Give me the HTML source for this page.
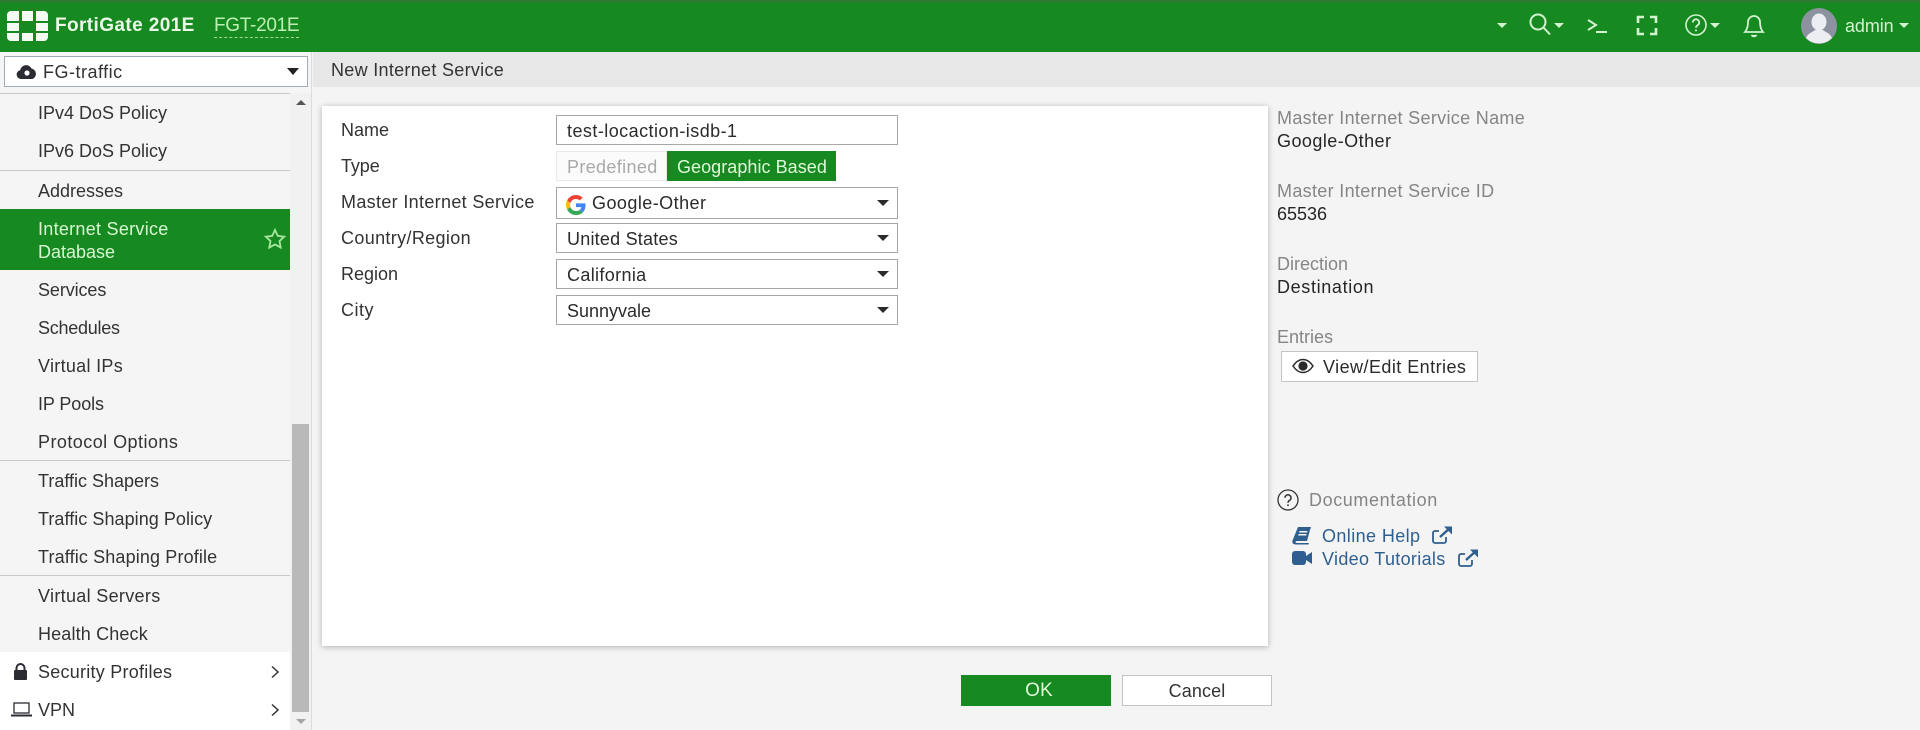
<!DOCTYPE html>
<html><head><meta charset="utf-8"><title>New Internet Service</title>
<style>
*{box-sizing:border-box}
html,body{margin:0;padding:0;width:1920px;height:730px;overflow:hidden;background:#f4f4f4;font-family:"Liberation Sans",sans-serif;font-size:18px;color:#333}
.t{position:absolute;white-space:nowrap;line-height:22px;height:22px;letter-spacing:.1px}
.b{position:absolute}
.sb{left:38px}
.lab{left:341px}
.inp{position:absolute;left:556px;width:342px;background:#fff;border:1px solid #a6a6a6}
.car{position:absolute;width:0;height:0;border-left:6px solid transparent;border-right:6px solid transparent;border-top:6px solid #2b2b2b}
.g{color:#858585;left:1277px}
.d{color:#262626;left:1277px}
.hc{position:absolute;width:0;height:0;border-left:5px solid transparent;border-right:5px solid transparent;border-top:5px solid #d2f2d0}
svg{position:absolute;overflow:visible}
.sep{position:absolute;left:0;width:290px;height:1px;background:#c9c9c9}
.lnk{color:#2f5f8f}
</style></head><body>

<!-- top bar -->
<div class="b" style="left:0;top:0;width:1920px;height:52px;background:#168a20;border-top:3px solid #2a7a30"></div>
<svg style="left:0;top:0" width="60" height="52" fill="#f4fbf2">
<path d="M11 11h8v10H7v-6a4 4 0 0 1 4-4zM22 11h11v10H22zM36 11h8a4 4 0 0 1 4 4v6H36zM7 23h12v8H7zM36 23h12v8H36zM7 33h12v8h-8a4 4 0 0 1-4-4zM22 33h11v8H22zM36 33h12v4a4 4 0 0 1-4 4h-8z"/>
</svg>
<div class="t" style="left:55px;top:15px;font-weight:bold;font-size:19px;color:#ecf9e8;letter-spacing:.4px">FortiGate 201E</div>
<div class="t" style="left:214px;top:15px;font-size:19px;color:#bdf0b4;letter-spacing:-.3px;height:23px;border-bottom:1px dashed #9fd89a">FGT-201E</div>

<div class="hc" style="left:1497px;top:23px"></div>
<svg style="left:1527px;top:12px" width="28" height="26" fill="none" stroke="#d2f2d0" stroke-width="2"><circle cx="11" cy="10" r="7.5"/><path d="M16.500 15.500l6.500 7"/></svg>
<div class="hc" style="left:1554px;top:23px"></div>
<svg style="left:1586px;top:16px" width="24" height="20" fill="none" stroke="#d2f2d0" stroke-width="2"><path d="M2 4l8 5-8 5M10 16h11"/></svg>
<svg style="left:1636px;top:15px" width="22" height="22" fill="none" stroke="#d2f2d0" stroke-width="2.6"><path d="M8 2H2v6M14 2h6v6M2 13v6h6M20 13v6h-6"/></svg>
<svg style="left:1684px;top:13px" width="24" height="24" fill="none" stroke="#d2f2d0" stroke-width="1.6"><circle cx="12" cy="12" r="10"/><path d="M8.800 9.500a3.200 3.200 0 1 1 5 2.600c-1.200.8-1.800 1.400-1.800 2.600" stroke-width="1.8"/><circle cx="12" cy="17.400" r="1" fill="#d2f2d0" stroke="none"/></svg>
<div class="hc" style="left:1710px;top:23px"></div>
<svg style="left:1743px;top:14px" width="22" height="24" fill="none" stroke="#d2f2d0" stroke-width="1.8"><path d="M11 2a6 6 0 0 0-6 6c0 5-1 7.500-3 10h18c-2-2.500-3-5-3-10a6 6 0 0 0-6-6z"/><path d="M8.500 21a3 3 0 0 0 5 0" fill="#d2f2d0"/></svg>
<svg style="left:1801px;top:8px" width="36" height="36"><circle cx="18" cy="18" r="18" fill="#8d92a0"/><ellipse cx="18" cy="14" rx="7.500" ry="8.500" fill="#eceef2"/><path d="M5 30c2-5 7-6 9-8h8c2 2 7 3 9 8a18 18 0 0 1-26 0z" fill="#eceef2"/></svg>
<div class="t" style="left:1845px;top:15px;color:#d2f2d0;font-size:18px;letter-spacing:-.1px">admin</div>
<div class="hc" style="left:1899px;top:23px"></div>

<!-- sidebar -->
<div class="b" style="left:0;top:52px;width:312px;height:678px;background:#f5f5f5;border-right:1px solid #dcdcdc"></div>
<div class="b" style="left:290px;top:93px;width:21px;height:637px;background:#f1f1f1"></div>
<div class="b" style="left:292px;top:424px;width:17px;height:288px;background:#b9b9b9"></div>
<div class="car" style="left:296px;top:100px;border-top:0;border-bottom:5px solid #555;border-left-width:5px;border-right-width:5px"></div>
<div class="car" style="left:296px;top:719px;border-top-color:#a5a5a5;border-top-width:5px;border-left-width:5px;border-right-width:5px"></div>

<div class="b" style="left:4px;top:56px;width:304px;height:31px;background:#fff;border:1px solid #a3abb5"></div>
<svg style="left:16px;top:63px" width="22" height="17"><path d="M5 16a4.500 4.500 0 0 1-.8-8.900A6 6 0 0 1 15.500 5.500 5.500 5.500 0 0 1 16.500 16z" fill="#2b2b33"/><circle cx="11" cy="10" r="2.600" fill="#fff"/></svg>
<div class="t" style="left:43px;top:61px;letter-spacing:.5px">FG-traffic</div>
<div class="car" style="left:287px;top:68px;border-left-width:6px;border-right-width:6px;border-top-width:7px;border-top-color:#222"></div>

<div class="sep" style="top:93px"></div>
<div class="t sb" style="top:102px;letter-spacing:0">IPv4 DoS Policy</div>
<div class="t sb" style="top:140px;letter-spacing:0">IPv6 DoS Policy</div>
<div class="sep" style="top:170px"></div>
<div class="t sb" style="top:180px;letter-spacing:0">Addresses</div>
<div class="b" style="left:0;top:209px;width:290px;height:61px;background:#168a20"></div>
<div class="t sb" style="top:218px;color:#d9f7d2;letter-spacing:.28px">Internet Service</div>
<div class="t sb" style="top:241px;color:#d9f7d2;letter-spacing:0">Database</div>
<svg style="left:264px;top:228px" width="22" height="22" fill="none" stroke="#a8e6a0" stroke-width="1.800"><path d="M11 2l2.800 5.900 6.400.8-4.700 4.400 1.200 6.400L11 16.400 5.300 19.500l1.200-6.400L1.800 8.700l6.400-.8z"/></svg>
<div class="t sb" style="top:279px;letter-spacing:-.1px">Services</div>
<div class="t sb" style="top:317px;letter-spacing:-.25px">Schedules</div>
<div class="t sb" style="top:355px;letter-spacing:.3px">Virtual IPs</div>
<div class="t sb" style="top:393px;letter-spacing:-.1px">IP Pools</div>
<div class="t sb" style="top:431px;letter-spacing:.45px">Protocol Options</div>
<div class="sep" style="top:460px"></div>
<div class="t sb" style="top:470px;letter-spacing:0">Traffic Shapers</div>
<div class="t sb" style="top:508px;letter-spacing:.05px">Traffic Shaping Policy</div>
<div class="t sb" style="top:546px;letter-spacing:.14px">Traffic Shaping Profile</div>
<div class="sep" style="top:575px"></div>
<div class="t sb" style="top:585px;letter-spacing:.32px">Virtual Servers</div>
<div class="t sb" style="top:623px;letter-spacing:.15px">Health Check</div>
<div class="b" style="left:0;top:652px;width:290px;height:78px;background:#fff"></div>
<svg style="left:13px;top:663px" width="15" height="17"><path d="M3.500 7V5a4 4 0 0 1 8 0v2" fill="none" stroke="#2b2b33" stroke-width="2"/><rect x="1" y="7" width="13" height="10" rx="1" fill="#2b2b33"/></svg>
<div class="t sb" style="top:661px;letter-spacing:.25px">Security Profiles</div>
<svg style="left:11px;top:702px" width="21" height="15" fill="none" stroke="#2b2b33" stroke-width="1.300"><rect x="3" y="1" width="15" height="10"/><path d="M0 13.500h21" stroke-width="2"/></svg>
<div class="t sb" style="top:699px;letter-spacing:0">VPN</div>
<svg style="left:270px;top:665px" width="10" height="14" fill="none" stroke="#333" stroke-width="1.500"><path d="M2 1.500l6 5.500-6 5.500"/></svg>
<svg style="left:270px;top:703px" width="10" height="14" fill="none" stroke="#333" stroke-width="1.500"><path d="M2 1.500l6 5.500-6 5.500"/></svg>

<!-- main -->
<div class="b" style="left:313px;top:52px;width:1607px;height:35px;background:#e7e7e7"></div>
<div class="t" style="left:331px;top:59px;letter-spacing:.3px">New Internet Service</div>

<div class="b" style="left:322px;top:106px;width:946px;height:540px;background:#fff;box-shadow:0 1px 6px rgba(0,0,0,.28)"></div>

<div class="t lab" style="top:119px;letter-spacing:0">Name</div>
<div class="t lab" style="top:155px;letter-spacing:-.1px">Type</div>
<div class="t lab" style="top:191px;letter-spacing:.33px">Master Internet Service</div>
<div class="t lab" style="top:227px;letter-spacing:.35px">Country/Region</div>
<div class="t lab" style="top:263px;letter-spacing:0">Region</div>
<div class="t lab" style="top:299px;letter-spacing:.5px">City</div>

<div class="inp" style="top:115px;height:30px"></div>
<div class="t" style="left:567px;top:120px;color:#2b2b2b;letter-spacing:.45px">test-locaction-isdb-1</div>

<div class="b" style="left:556px;top:151px;width:111px;height:30px;background:#fbfbfb;border:1px solid #e8e8e8"></div>
<div class="t" style="left:567px;top:156px;color:#a9a9a9;letter-spacing:.35px">Predefined</div>
<div class="b" style="left:667px;top:151px;width:169px;height:30px;background:#168a20"></div>
<div class="t" style="left:677px;top:156px;color:#e0f8da;letter-spacing:.05px">Geographic Based</div>

<div class="inp" style="top:187px;height:32px"></div>
<svg style="left:566px;top:195px" width="20" height="20" viewBox="0 0 48 48"><path fill="#EA4335" d="M24 9.500c3.500 0 6.700 1.300 9.100 3.500l6.800-6.800C35.800 2.400 30.300 0 24 0 14.600 0 6.500 5.400 2.600 13.200l7.900 6.100C12.400 13.700 17.700 9.500 24 9.500z"/><path fill="#4285F4" d="M46.900 24.500c0-1.600-.2-3.100-.4-4.500H24v9h12.900c-.6 3-2.200 5.500-4.700 7.200l7.700 6c4.500-4.200 7-10.300 7-17.700z"/><path fill="#FBBC05" d="M10.500 28.700c-.5-1.500-.8-3-.8-4.700s.3-3.200.8-4.700l-7.900-6.100C.9 16.500 0 20.100 0 24s.9 7.500 2.600 10.800z"/><path fill="#34A853" d="M24 48c6.500 0 11.900-2.100 15.900-5.800l-7.700-6c-2.200 1.400-4.900 2.300-8.200 2.300-6.300 0-11.600-4.200-13.500-9.800l-7.900 6.100C6.500 42.600 14.600 48 24 48z"/></svg>
<div class="t" style="left:592px;top:192px;color:#2b2b2b;letter-spacing:.45px">Google-Other</div>
<div class="car" style="left:877px;top:200px"></div>

<div class="inp" style="top:223px;height:30px"></div>
<div class="t" style="left:567px;top:228px;color:#2b2b2b;letter-spacing:.22px">United States</div>
<div class="car" style="left:877px;top:235px"></div>

<div class="inp" style="top:259px;height:30px"></div>
<div class="t" style="left:567px;top:264px;color:#2b2b2b;letter-spacing:.35px">California</div>
<div class="car" style="left:877px;top:271px"></div>

<div class="inp" style="top:295px;height:30px"></div>
<div class="t" style="left:567px;top:300px;color:#2b2b2b;letter-spacing:0">Sunnyvale</div>
<div class="car" style="left:877px;top:307px"></div>

<!-- right panel -->
<div class="t g" style="top:107px;letter-spacing:.32px">Master Internet Service Name</div>
<div class="t d" style="top:130px;letter-spacing:.45px">Google-Other</div>
<div class="t g" style="top:180px;letter-spacing:.32px">Master Internet Service ID</div>
<div class="t d" style="top:203px;letter-spacing:0">65536</div>
<div class="t g" style="top:253px;letter-spacing:0">Direction</div>
<div class="t d" style="top:276px;letter-spacing:.65px">Destination</div>
<div class="t g" style="top:326px;letter-spacing:0">Entries</div>

<div class="b" style="left:1281px;top:351px;width:197px;height:31px;background:#fff;border:1px solid #c4c4c4"></div>
<svg style="left:1292px;top:358px" width="22" height="16"><path d="M1 8c3-4.500 6.500-6.500 10-6.500S18 3.500 21 8c-3 4.500-6.500 6.500-10 6.500S4 12.500 1 8z" fill="none" stroke="#2b2b2b" stroke-width="1.500"/><circle cx="11" cy="8" r="4.600" fill="#2b2b2b"/></svg>
<div class="t" style="left:1323px;top:356px;color:#2b2b2b;letter-spacing:.45px">View/Edit Entries</div>

<svg style="left:1277px;top:489px" width="22" height="22" fill="none" stroke="#333" stroke-width="1.300"><circle cx="11" cy="11" r="10"/><path d="M8 8.800a3 3 0 1 1 4.700 2.500c-1.100.7-1.700 1.300-1.700 2.400" stroke-width="1.500"/><circle cx="11" cy="16.200" r=".9" fill="#333" stroke="none"/></svg>
<div class="t" style="left:1309px;top:489px;color:#858585;letter-spacing:.6px">Documentation</div>

<svg style="left:1292px;top:526px" width="20" height="19"><path d="M6 1h13l-1 3-3 11H5c-2 0-2 2 0 2h12l-.5 1.500H4c-3.500 0-4-2-3.500-4zM7.500 5l-.4 1.500h8l.4-1.500zM6.600 8l-.4 1.500h8l.4-1.500z" fill="#2f5f8f" fill-rule="evenodd"/></svg>
<div class="t lnk" style="left:1322px;top:525px;letter-spacing:.4px">Online Help</div>
<svg style="left:1431px;top:525px" width="22" height="20" fill="none" stroke="#2f5f8f" stroke-width="1.800"><path d="M15 12v4a2 2 0 0 1-2 2H4a2 2 0 0 1-2-2V8a2 2 0 0 1 2-2h4"/><path d="M9 12L19 3" stroke-width="2.400"/><path d="M13 1.500h8v8z" fill="#2f5f8f" stroke="none"/></svg>

<svg style="left:1291px;top:550px" width="22" height="16" fill="#2f5f8f"><rect x="1" y="1" width="14" height="14" rx="3"/><path d="M15 6l6-4v12l-6-4z"/></svg>
<div class="t lnk" style="left:1322px;top:548px;letter-spacing:.32px">Video Tutorials</div>
<svg style="left:1457px;top:548px" width="22" height="20" fill="none" stroke="#2f5f8f" stroke-width="1.800"><path d="M15 12v4a2 2 0 0 1-2 2H4a2 2 0 0 1-2-2V8a2 2 0 0 1 2-2h4"/><path d="M9 12L19 3" stroke-width="2.400"/><path d="M13 1.500h8v8z" fill="#2f5f8f" stroke="none"/></svg>

<!-- buttons -->
<div class="b" style="left:961px;top:675px;width:150px;height:31px;background:#168a20"></div>
<div class="t" style="left:964px;width:150px;text-align:center;top:680px;color:#dff8da;font-size:19px">OK</div>
<div class="b" style="left:1122px;top:675px;width:150px;height:31px;background:#fff;border:1px solid #c4c4c4"></div>
<div class="t" style="left:1122px;width:150px;text-align:center;top:680px;color:#333">Cancel</div>
</body></html>
